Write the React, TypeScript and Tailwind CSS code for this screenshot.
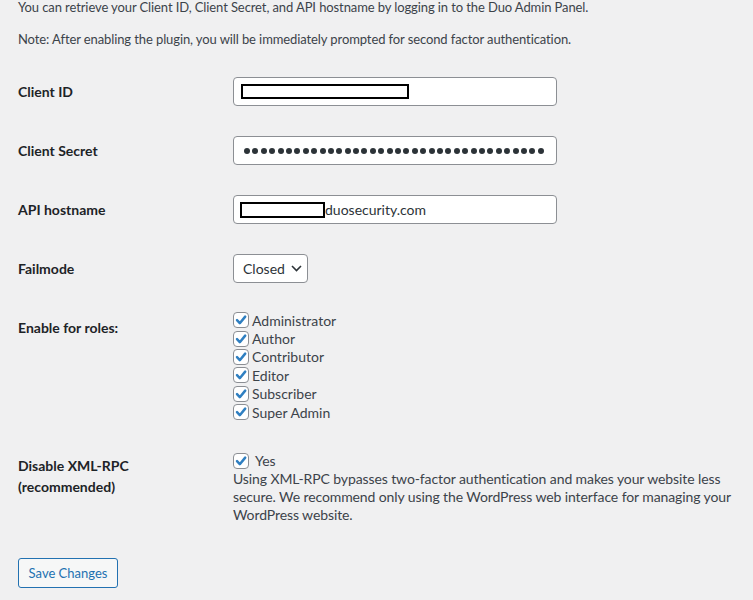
import React from "react";

const font = { fontFamily: 'Lato, "Noto Sans", sans-serif' };

function Check() {
  return (
    <span className="inline-flex h-[16px] w-[16px] shrink-0 items-center justify-center rounded-[4px] border border-[#8c8f94] bg-white">
      <svg width="14" height="14" viewBox="0 0 14 14" fill="none">
        <path d="M3 7.2 L5.8 10.2 L11.2 3.6" stroke="#2f7fc1" strokeWidth="2.5" strokeLinecap="round" strokeLinejoin="round" />
      </svg>
    </span>
  );
}

function Row({ label, children }: { label: string; children: React.ReactNode }) {
  return (
    <div className="flex h-[59px] items-center">
      <div className="w-[215px] text-[14px] font-bold text-[#1d2327]">{label}</div>
      {children}
    </div>
  );
}

const roles = ["Administrator", "Author", "Contributor", "Editor", "Subscriber", "Super Admin"];

export default function App() {
  return (
    <div className="min-h-[600px] w-full overflow-hidden bg-[#f0f0f1] pl-[18px] text-[#3c434a]" style={font}>
      <p className="mt-[-2px] text-[13px] leading-[19px] tracking-[-0.1px]">
        You can retrieve your Client ID, Client Secret, and API hostname by logging in to the Duo Admin Panel.
      </p>
      <p className="mt-[13px] text-[13px] leading-[19px] tracking-[-0.1px]">
        Note: After enabling the plugin, you will be immediately prompted for second factor authentication.
      </p>

      <div className="mt-[13px]">
        <Row label="Client ID">
          <div className="flex h-[29px] w-[324px] items-center rounded-[4px] border border-[#8c8f94] bg-white pl-[7px]">
            <div className="h-[15px] w-[168px] border-2 border-black bg-white" />
          </div>
        </Row>
        <Row label="Client Secret">
          <div className="flex h-[29px] w-[324px] items-center gap-[2.4px] rounded-[4px] border border-[#8c8f94] bg-white pl-[10px]">
            {Array.from({ length: 36 }).map((_, i) => (
              <span key={i} className="h-[6px] w-[6px] rounded-full bg-[#2c3338]" />
            ))}
          </div>
        </Row>
        <Row label="API hostname">
          <div className="flex h-[29px] w-[324px] items-center rounded-[4px] border border-[#8c8f94] bg-white pl-[6px] text-[14px] text-[#2c3338]">
            <div className="h-[16px] w-[85px] border-2 border-black bg-white" />
            <span>duosecurity.com</span>
          </div>
        </Row>
        <Row label="Failmode">
          <div className="flex h-[29px] w-[75px] items-center rounded-[4px] border border-[#8c8f94] bg-white pl-[9px] text-[14px] text-[#2c3338]">
            <span>Closed</span>
            <svg className="ml-[6px]" width="11" height="7" viewBox="0 0 11 7" fill="none">
              <path d="M1 1 L5.5 5.5 L10 1" stroke="#2c3338" strokeWidth="1.6" />
            </svg>
          </div>
        </Row>
      </div>

      <div className="mt-[13px] flex">
        <div className="mt-[6px] w-[215px] text-[14px] font-bold leading-[21px] text-[#1d2327]">Enable for roles:</div>
        <div className="flex flex-col">
          {roles.map((r) => (
            <label key={r} className="flex h-[18.4px] items-center gap-[3px] text-[14px]">
              <Check />
              <span>{r}</span>
            </label>
          ))}
        </div>
      </div>

      <div className="mt-[31px] flex">
        <div className="mt-[3px] w-[215px] text-[14px] font-bold leading-[21px] text-[#1d2327]">
          Disable XML-RPC
          <br />
          (recommended)
        </div>
        <div className="text-[14px] leading-[18px]">
          <label className="flex h-[18px] items-center gap-[6px]">
            <Check />
            <span>Yes</span>
          </label>
          <p className="whitespace-nowrap tracking-[-0.1px]">
            Using XML-RPC bypasses two-factor authentication and makes your website less
            <br />
            secure. We recommend only using the WordPress web interface for managing your
            <br />
            WordPress website.
          </p>
        </div>
      </div>

      <button className="mt-[34px] flex h-[30px] w-[100px] items-center justify-center rounded-[3px] border border-[#2271b1] bg-[#f6f7f7] text-[13px] text-[#2271b1]">
        Save Changes
      </button>
    </div>
  );
}
